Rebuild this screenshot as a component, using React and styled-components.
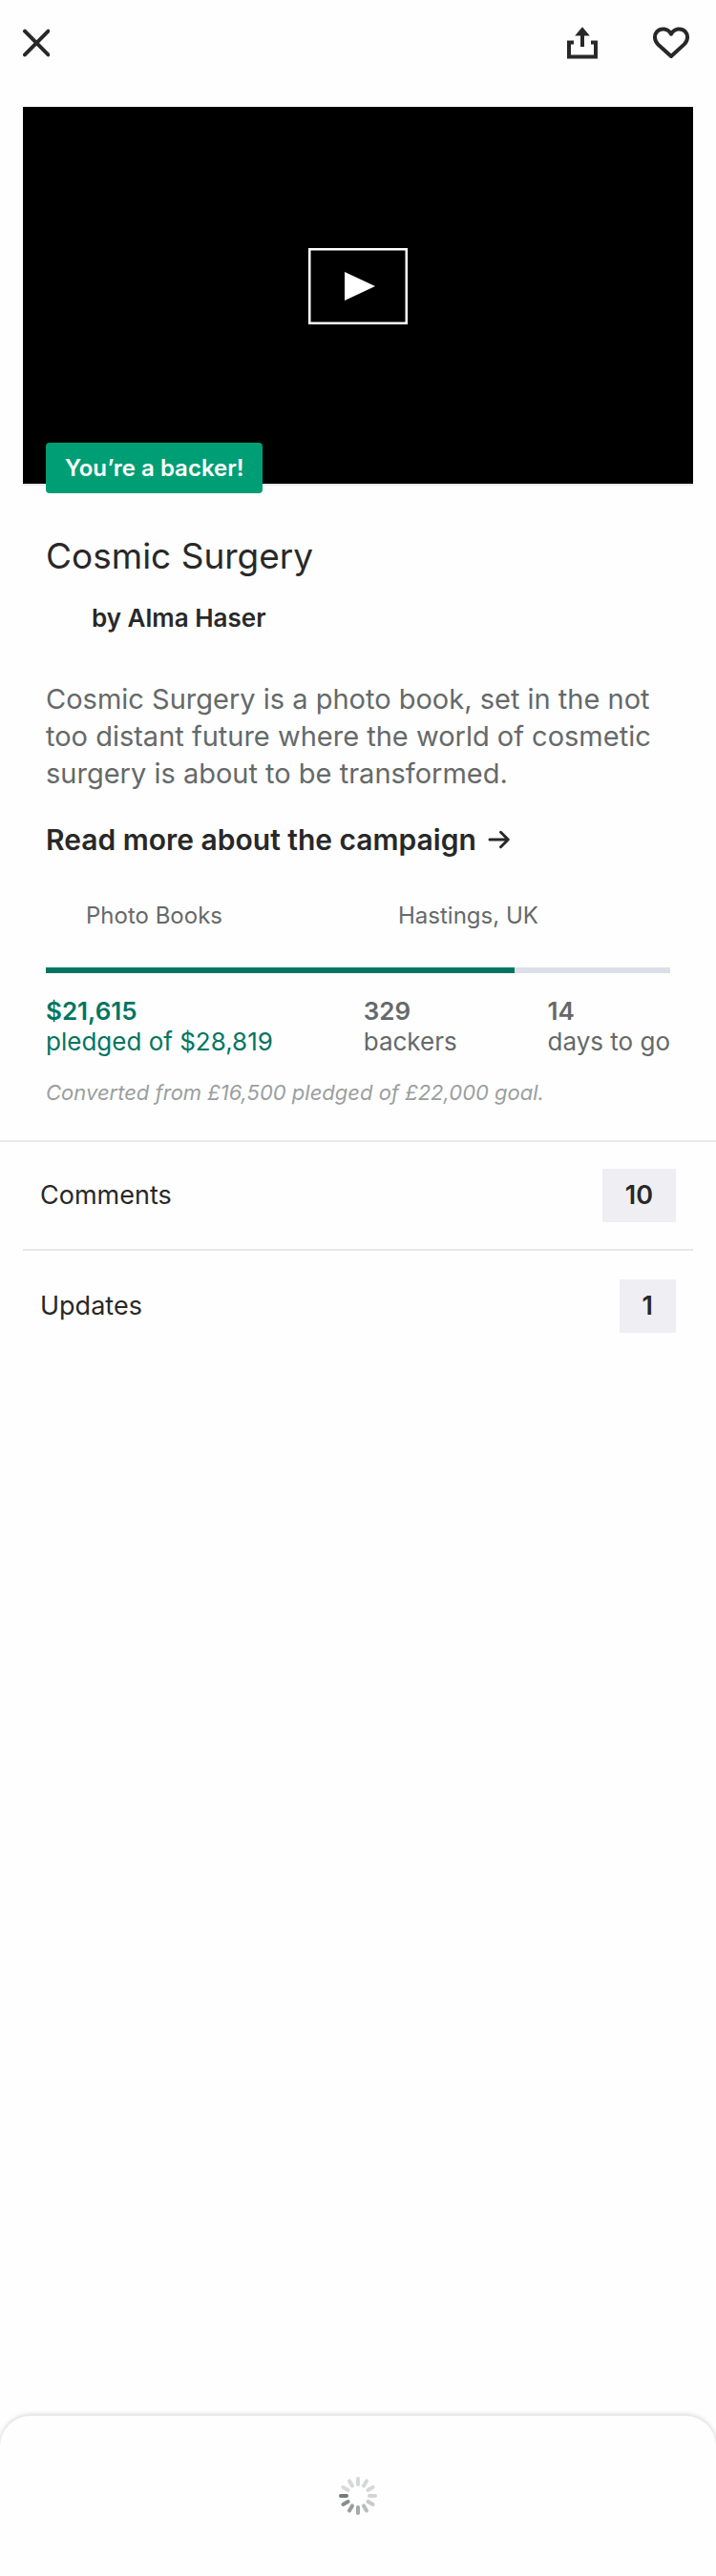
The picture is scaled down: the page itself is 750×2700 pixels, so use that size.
import React from 'react';
import styled, { createGlobalStyle, ThemeProvider } from 'styled-components';

const theme = {
  ink: '#282828',
  muted: '#656969',
  faint: '#9b9e9e',
  line: '#e8e8e8',
  green: '#009e74',
  deepGreen: '#007562',
  track: '#dcdee8',
  chip: '#efeef3',
  page: '#fefefe',
};

const GlobalStyle = createGlobalStyle`
  *, *::before, *::after { box-sizing: border-box; }
  body {
    margin: 0;
    background: ${theme.page};
    color: ${theme.ink};
    font-family: Inter, "Liberation Sans", sans-serif;
  }
  h1, p, dl, dd, dt, ul { margin: 0; padding: 0; }
  a { color: inherit; text-decoration: none; }
`;

const Page = styled.div`
  min-height: 100vh;
  display: flex;
  flex-direction: column;
`;

const TopBar = styled.header`
  height: 90px;
  padding: 0 28px 0 24px;
  display: flex;
  align-items: center;
  justify-content: space-between;
`;

const Actions = styled.div`
  display: flex;
  align-items: center;
  gap: 58px;
`;

const IconButton = styled.button`
  display: flex;
  padding: 0;
  border: 0;
  background: none;
  color: inherit;
  cursor: pointer;
`;

const Media = styled.section`
  position: relative;
  margin: 22px 24px 0;
  border-bottom: 2px solid ${({ theme }) => theme.line};
`;

const Video = styled.div`
  aspect-ratio: 16 / 9;
  padding-bottom: 19px;
  display: flex;
  align-items: center;
  justify-content: center;
  background: #000;
`;

const BackerBadge = styled.span`
  position: absolute;
  left: 24px;
  bottom: -10px;
  padding: 0 20px;
  border-radius: 4px;
  background: ${({ theme }) => theme.green};
  color: #fff;
  font-size: 24px;
  font-weight: 600;
  line-height: 53px;
`;

const Details = styled.section`
  padding: 52px 48px 36px;
`;

const Title = styled.h1`
  font-size: 37px;
  font-weight: 400;
  line-height: 44px;
`;

const Creator = styled.a`
  display: block;
  margin-top: 27px;
  padding-left: 48px;
  font-size: 26px;
  font-weight: 600;
  line-height: 32px;
`;

const Blurb = styled.p`
  margin-top: 49px;
  color: ${({ theme }) => theme.muted};
  font-size: 29px;
  line-height: 39px;
`;

const ReadMore = styled.a`
  display: flex;
  align-items: center;
  gap: 12px;
  margin-top: 32px;
  font-size: 30px;
  font-weight: 600;
  line-height: 36px;
`;

const Tags = styled.div`
  display: grid;
  grid-template-columns: 1fr 1fr;
  margin-top: 47px;
`;

const Tag = styled.a`
  padding-left: 42px;
  color: ${({ theme }) => theme.muted};
  font-size: 24px;
  line-height: 30px;
`;

const Track = styled.div`
  height: 6px;
  margin-top: 39px;
  background: ${({ theme }) => theme.track};
`;

const Fill = styled.div`
  height: 100%;
  background: ${({ theme }) => theme.deepGreen};
`;

const Stats = styled.dl`
  display: flex;
  justify-content: space-between;
  margin-top: 24px;
`;

const Stat = styled.div`
  display: flex;
  flex-direction: column-reverse;
  color: ${({ theme, $accent }) => ($accent ? theme.deepGreen : theme.muted)};
  font-size: 26px;
  line-height: 32px;
`;

const StatValue = styled.dd`
  font-weight: 600;
`;

const Note = styled.p`
  margin-top: 23px;
  color: ${({ theme }) => theme.faint};
  font-size: 22px;
  font-style: italic;
  line-height: 28px;
`;

const LinkList = styled.ul`
  padding: 0 24px;
  border-top: 2px solid ${({ theme }) => theme.line};
  list-style: none;
`;

const LinkItem = styled.li`
  padding: 30px 18px;

  &:first-child {
    padding: 28px 18px;
    border-bottom: 2px solid ${({ theme }) => theme.line};
  }
`;

const LinkRow = styled.a`
  display: flex;
  align-items: center;
  justify-content: space-between;
  font-size: 27px;
`;

const Count = styled.span`
  padding: 0 24px;
  background: ${({ theme }) => theme.chip};
  font-weight: 600;
  line-height: 56px;
`;

const Sheet = styled.footer`
  height: 168px;
  margin-top: auto;
  display: flex;
  align-items: center;
  justify-content: center;
  border-radius: 32px 32px 0 0;
  background: ${({ theme }) => theme.page};
  box-shadow: 0 -1px 5px rgba(0, 0, 0, 0.18);
`;

const CloseIcon = () => (
  <svg width="28" height="30" viewBox="0 0 28 30" aria-hidden="true">
    <path d="M2 2.7 26.5 27.3M26.5 2.7 2 27.3" fill="none" stroke="currentColor" strokeWidth="4" strokeLinecap="round" />
  </svg>
);

const ShareIcon = () => (
  <svg width="32" height="34" viewBox="0 0 32 34" aria-hidden="true">
    <path d="M16 .3 23.8 9.4H18V21h-4V9.4H8.2Z" fill="currentColor" />
    <path d="M7 16.6H2V31.6H30V16.6H25" fill="none" stroke="currentColor" strokeWidth="4" />
  </svg>
);

const HeartIcon = () => (
  <svg width="38" height="34" viewBox="0 0 38 34" aria-hidden="true">
    <path
      d="M19 31 5.2 18.4C1.2 14.6 1 8.8 4.2 5.2 8.3 1 15.5 1.6 19 7.7 22.5 1.6 29.7 1 33.8 5.2 37 8.8 36.8 14.6 32.8 18.4Z"
      fill="none"
      stroke="currentColor"
      strokeWidth="4"
      strokeLinejoin="round"
    />
  </svg>
);

const PlayIcon = () => (
  <svg width="104" height="80" viewBox="0 0 104 80" aria-hidden="true">
    <rect x="1.25" y="1.25" width="101.5" height="77.5" fill="none" stroke="#fff" strokeWidth="2.5" />
    <path d="M38 25v30l32-15z" fill="#fff" />
  </svg>
);

const ArrowIcon = () => (
  <svg width="24" height="20" viewBox="0 0 24 20" aria-hidden="true">
    <path d="M2 10H21M13.5 2.3 21.3 10 13.5 17.7" fill="none" stroke="currentColor" strokeWidth="3" strokeLinecap="round" strokeLinejoin="round" />
  </svg>
);

const spokes = ['#d6d8d7', '#d6d8d7', '#d6d8d7', '#d3d5d4', '#c8caca', '#babcbc', '#a6a9a8', '#9a9c9b', '#8c8e8e', '#787a79', '#d8dad9', '#d6d8d7'];

const Spinner = () => (
  <svg width="40" height="40" viewBox="-20 -20 40 40" role="img" aria-label="Loading">
    {spokes.map((color, i) => (
      <rect key={i} x="-2" y="-20" width="4" height="10" rx="2" fill={color} transform={`rotate(${i * 30})`} />
    ))}
  </svg>
);

const stats = [
  { value: '$21,615', label: 'pledged of $28,819', accent: true },
  { value: '329', label: 'backers' },
  { value: '14', label: 'days to go' },
];

const links = [
  { label: 'Comments', count: 10 },
  { label: 'Updates', count: 1 },
];

const funded = 75;

export default function App() {
  return (
    <ThemeProvider theme={theme}>
      <GlobalStyle />
      <Page>
        <TopBar>
          <IconButton type="button" aria-label="Close"><CloseIcon /></IconButton>
          <Actions>
            <IconButton type="button" aria-label="Share"><ShareIcon /></IconButton>
            <IconButton type="button" aria-label="Save project"><HeartIcon /></IconButton>
          </Actions>
        </TopBar>
        <main>
          <Media>
            <Video>
              <IconButton type="button" aria-label="Play video"><PlayIcon /></IconButton>
            </Video>
            <BackerBadge>You’re a backer!</BackerBadge>
          </Media>
          <Details>
            <Title>Cosmic Surgery</Title>
            <Creator href="#creator">by Alma Haser</Creator>
            <Blurb>
              Cosmic Surgery is a photo book, set in the not too distant future where the world of cosmetic surgery is
              about to be transformed.
            </Blurb>
            <ReadMore href="#campaign">Read more about the campaign<ArrowIcon /></ReadMore>
            <Tags>
              <Tag href="#category">Photo Books</Tag>
              <Tag href="#location">Hastings, UK</Tag>
            </Tags>
            <Track role="progressbar" aria-label="Funding" aria-valuenow={funded} aria-valuemin={0} aria-valuemax={100}>
              <Fill style={{ width: `${funded}%` }} />
            </Track>
            <Stats>
              {stats.map((s) => (
                <Stat key={s.label} $accent={s.accent}>
                  <dt>{s.label}</dt>
                  <StatValue>{s.value}</StatValue>
                </Stat>
              ))}
            </Stats>
            <Note>Converted from £16,500 pledged of £22,000 goal.</Note>
          </Details>
          <LinkList>
            {links.map((l) => (
              <LinkItem key={l.label}>
                <LinkRow href={`#${l.label.toLowerCase()}`}>
                  {l.label}
                  <Count>{l.count}</Count>
                </LinkRow>
              </LinkItem>
            ))}
          </LinkList>
        </main>
        <Sheet><Spinner /></Sheet>
      </Page>
    </ThemeProvider>
  );
}
